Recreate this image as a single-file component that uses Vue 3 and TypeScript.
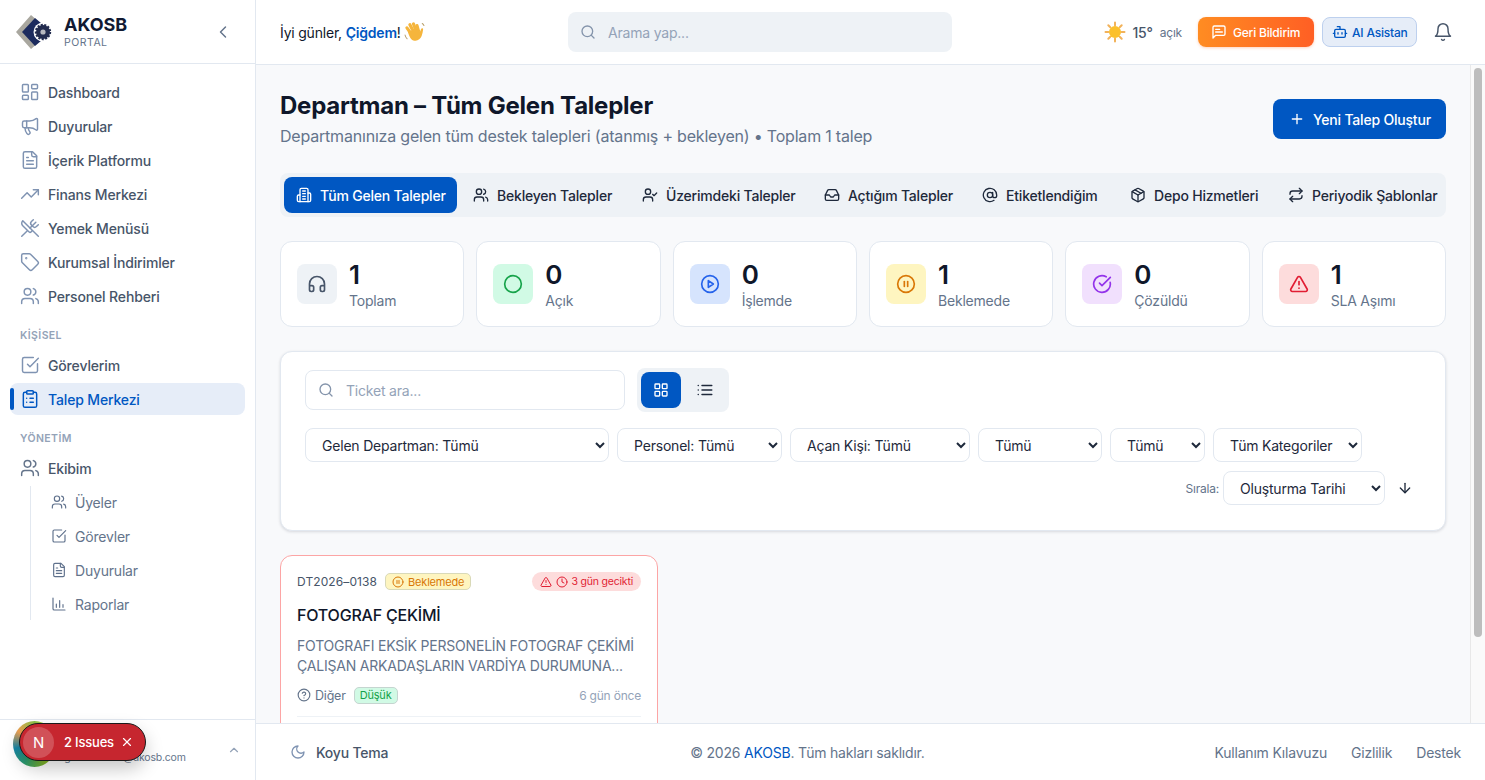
<script setup lang="ts">
import { h } from 'vue';

// lucide shapes, only what this page needs
const icons: Record<string, string> = {
  dashboard: '<rect x="3" y="3" width="7" height="9" rx="1"/><rect x="14" y="3" width="7" height="5" rx="1"/><rect x="14" y="12" width="7" height="9" rx="1"/><rect x="3" y="16" width="7" height="5" rx="1"/>',
  megaphone: '<path d="M11 6a13 13 0 0 0 8.4-2.8A1 1 0 0 1 21 4v12a1 1 0 0 1-1.6.8A13 13 0 0 0 11 14H5a2 2 0 0 1-2-2V8a2 2 0 0 1 2-2z"/><path d="M6 14a12 12 0 0 0 2.4 7.2 2 2 0 0 0 3.2-2.4A8 8 0 0 1 10 14"/><path d="M8 6v8"/>',
  file: '<path d="M15 2H6a2 2 0 0 0-2 2v16a2 2 0 0 0 2 2h12a2 2 0 0 0 2-2V7Z"/><path d="M14 2v4a2 2 0 0 0 2 2h4"/><path d="M10 9H8"/><path d="M16 13H8"/><path d="M16 17H8"/>',
  trending: '<path d="M16 7h6v6"/><path d="m22 7-8.5 8.5-5-5L2 17"/>',
  utensils: '<path d="m16 2-2.3 2.3a3 3 0 0 0 0 4.2l1.8 1.8a3 3 0 0 0 4.2 0L22 8"/><path d="M15 15 3.3 3.3a4.2 4.2 0 0 0 0 6l7.3 7.3c.7.7 2 .7 2.8 0L15 15Zm0 0 7 7"/><path d="m2.1 21.8 6.4-6.3"/><path d="m19 5-7 7"/>',
  tag: '<path d="M12.586 2.586A2 2 0 0 0 11.172 2H4a2 2 0 0 0-2 2v7.172a2 2 0 0 0 .586 1.414l8.704 8.704a2.426 2.426 0 0 0 3.42 0l6.58-6.58a2.426 2.426 0 0 0 0-3.42z"/><circle cx="7.5" cy="7.5" r=".5"/>',
  users: '<path d="M16 21v-2a4 4 0 0 0-4-4H6a4 4 0 0 0-4 4v2"/><circle cx="9" cy="7" r="4"/><path d="M22 21v-2a4 4 0 0 0-3-3.87"/><path d="M16 3.13a4 4 0 0 1 0 7.75"/>',
  check: '<path d="M21 10.5V19a2 2 0 0 1-2 2H5a2 2 0 0 1-2-2V5a2 2 0 0 1 2-2h11"/><path d="m9 11 3 3L22 4"/>',
  clipboard: '<rect x="8" y="2" width="8" height="4" rx="1"/><path d="M16 4h2a2 2 0 0 1 2 2v14a2 2 0 0 1-2 2H6a2 2 0 0 1-2-2V6a2 2 0 0 1 2-2h2"/><path d="M12 11h4"/><path d="M12 16h4"/><path d="M8 11h.01"/><path d="M8 16h.01"/>',
  chart: '<path d="M3 3v16a2 2 0 0 0 2 2h16"/><path d="M8 17v-5"/><path d="M13 17V7"/><path d="M18 17v-4"/>',
  left: '<path d="m15 18-6-6 6-6"/>',
  up: '<path d="m18 15-6-6-6 6"/>',
  search: '<circle cx="11" cy="11" r="8"/><path d="m21 21-4.3-4.3"/>',
  message: '<path d="M21 15a2 2 0 0 1-2 2H7l-4 4V5a2 2 0 0 1 2-2h14a2 2 0 0 1 2 2z"/><path d="M13 8H7"/><path d="M17 12H7"/>',
  bot: '<path d="M12 8V4H8"/><rect x="4" y="8" width="16" height="12" rx="2"/><path d="M2 14h2"/><path d="M20 14h2"/><path d="M15 13v2"/><path d="M9 13v2"/>',
  bell: '<path d="M6 8a6 6 0 0 1 12 0c0 7 3 9 3 9H3s3-2 3-9"/><path d="M10.3 21a1.94 1.94 0 0 0 3.4 0"/>',
  plus: '<path d="M5 12h14"/><path d="M12 5v14"/>',
  building: '<path d="M6 22V4a2 2 0 0 1 2-2h8a2 2 0 0 1 2 2v18Z"/><path d="M6 12H4a2 2 0 0 0-2 2v6a2 2 0 0 0 2 2h2"/><path d="M18 9h2a2 2 0 0 1 2 2v9a2 2 0 0 1-2 2h-2"/><path d="M10 6h4"/><path d="M10 10h4"/><path d="M10 14h4"/><path d="M10 18h4"/>',
  usercheck: '<path d="M16 21v-2a4 4 0 0 0-4-4H6a4 4 0 0 0-4 4v2"/><circle cx="9" cy="7" r="4"/><path d="m16 11 2 2 4-4"/>',
  inbox: '<path d="M22 12h-6l-2 3h-4l-2-3H2"/><path d="M5.45 5.11 2 12v6a2 2 0 0 0 2 2h16a2 2 0 0 0 2-2v-6l-3.45-6.89A2 2 0 0 0 16.76 4H7.24a2 2 0 0 0-1.79 1.11z"/>',
  at: '<circle cx="12" cy="12" r="4"/><path d="M16 8v5a3 3 0 0 0 6 0v-1a10 10 0 1 0-4 8"/>',
  package: '<path d="m7.5 4.27 9 5.15"/><path d="M21 8a2 2 0 0 0-1-1.73l-7-4a2 2 0 0 0-2 0l-7 4A2 2 0 0 0 3 8v8a2 2 0 0 0 1 1.73l7 4a2 2 0 0 0 2 0l7-4A2 2 0 0 0 21 16Z"/><path d="m3.3 7 8.7 5 8.7-5"/><path d="M12 22V12"/>',
  repeat: '<path d="m17 2 4 4-4 4"/><path d="M3 11v-1a4 4 0 0 1 4-4h14"/><path d="m7 22-4-4 4-4"/><path d="M21 13v1a4 4 0 0 1-4 4H3"/>',
  headphones: '<path d="M3 14h3a2 2 0 0 1 2 2v3a2 2 0 0 1-2 2H5a2 2 0 0 1-2-2v-7a9 9 0 0 1 18 0v7a2 2 0 0 1-2 2h-1a2 2 0 0 1-2-2v-3a2 2 0 0 1 2-2h3"/>',
  circle: '<circle cx="12" cy="12" r="10"/>',
  play: '<circle cx="12" cy="12" r="10"/><path d="m10 8 6 4-6 4Z"/>',
  pause: '<circle cx="12" cy="12" r="10"/><path d="M10 15V9"/><path d="M14 15V9"/>',
  done: '<path d="M21.801 10A10 10 0 1 1 17 3.335"/><path d="m9 11 3 3L22 4"/>',
  alert: '<path d="m21.73 18-8-14a2 2 0 0 0-3.48 0l-8 14A2 2 0 0 0 4 21h16a2 2 0 0 0 1.73-3"/><path d="M12 9v4"/><path d="M12 17h.01"/>',
  grid: '<rect x="3" y="3" width="7" height="7" rx="1"/><rect x="14" y="3" width="7" height="7" rx="1"/><rect x="14" y="14" width="7" height="7" rx="1"/><rect x="3" y="14" width="7" height="7" rx="1"/>',
  list: '<path d="M3 12h.01"/><path d="M3 18h.01"/><path d="M3 6h.01"/><path d="M8 12h13"/><path d="M8 18h13"/><path d="M8 6h13"/>',
  down: '<path d="M12 5v14"/><path d="m19 12-7 7-7-7"/>',
  clock: '<circle cx="12" cy="12" r="10"/><path d="M12 6v6l4 2"/>',
  help: '<circle cx="12" cy="12" r="10"/><path d="M9.09 9a3 3 0 0 1 5.83 1c0 2-3 3-3 3"/><path d="M12 17h.01"/>',
  moon: '<path d="M12 3a6 6 0 0 0 9 9 9 9 0 1 1-9-9Z"/>',
  x: '<path d="M18 6 6 18"/><path d="m6 6 12 12"/>'
};

const Icon = (props: { name: string; size?: number }) =>
  h('svg', {
    width: props.size ?? 16,
    height: props.size ?? 16,
    viewBox: '0 0 24 24',
    fill: 'none',
    stroke: 'currentColor',
    'stroke-width': 2,
    'stroke-linecap': 'round',
    'stroke-linejoin': 'round',
    innerHTML: icons[props.name]
  });

const mainNav = [
  { icon: 'dashboard', label: 'Dashboard' },
  { icon: 'megaphone', label: 'Duyurular' },
  { icon: 'file', label: 'İçerik Platformu' },
  { icon: 'trending', label: 'Finans Merkezi' },
  { icon: 'utensils', label: 'Yemek Menüsü' },
  { icon: 'tag', label: 'Kurumsal İndirimler' },
  { icon: 'users', label: 'Personel Rehberi' }
];
const subNav = [
  { icon: 'users', label: 'Üyeler' },
  { icon: 'check', label: 'Görevler' },
  { icon: 'file', label: 'Duyurular' },
  { icon: 'chart', label: 'Raporlar' }
];
const tabs = [
  { icon: 'building', label: 'Tüm Gelen Talepler', active: true },
  { icon: 'users', label: 'Bekleyen Talepler' },
  { icon: 'usercheck', label: 'Üzerimdeki Talepler' },
  { icon: 'inbox', label: 'Açtığım Talepler' },
  { icon: 'at', label: 'Etiketlendiğim' },
  { icon: 'package', label: 'Depo Hizmetleri' },
  { icon: 'repeat', label: 'Periyodik Şablonlar' }
];
const stats = [
  { icon: 'headphones', value: 1, label: 'Toplam', tone: 'slate' },
  { icon: 'circle', value: 0, label: 'Açık', tone: 'green' },
  { icon: 'play', value: 0, label: 'İşlemde', tone: 'blue' },
  { icon: 'pause', value: 1, label: 'Beklemede', tone: 'yellow' },
  { icon: 'done', value: 0, label: 'Çözüldü', tone: 'purple' },
  { icon: 'alert', value: 1, label: 'SLA Aşımı', tone: 'red' }
];
const filters = [
  { label: 'Gelen Departman: Tümü', cls: 'w-dept' },
  { label: 'Personel: Tümü', cls: 'w-pers' },
  { label: 'Açan Kişi: Tümü', cls: 'w-acan' },
  { label: 'Tümü', cls: 'w-status' },
  { label: 'Tümü', cls: 'w-prio' },
  { label: 'Tüm Kategoriler', cls: 'w-cat' }
];
</script>

<template>
  <div class="shell">
    <aside class="sidebar">
      <div class="brand">
        <svg class="logo" width="37" height="34" viewBox="0 0 37 34">
          <path d="M0 17 15 0l7 6-11 11 11 11-7 6Z" fill="#a9a79f" />
          <path d="M6 17 19 3l13 11v6L19 31Z" fill="#1c2b5e" />
          <circle cx="27" cy="17" r="9.5" fill="#fff" />
          <circle cx="27" cy="17" r="7" fill="#232c4f" stroke="#232c4f" stroke-width="2.4" stroke-dasharray="2 1.4" />
          <circle cx="27" cy="17" r="2.6" fill="#b9bac0" />
        </svg>
        <div class="brand-text">
          <strong>AKOSB</strong>
          <span>PORTAL</span>
        </div>
        <Icon class="collapse" name="left" :size="20" />
      </div>

      <nav class="nav">
        <a v-for="item in mainNav" :key="item.label" class="nav-item">
          <Icon :name="item.icon" :size="20" />{{ item.label }}
        </a>
        <div class="nav-label">KİŞİSEL</div>
        <a class="nav-item"><Icon name="check" :size="20" />Görevlerim</a>
        <a class="nav-item active"><Icon name="clipboard" :size="20" />Talep Merkezi</a>
        <div class="nav-label">YÖNETİM</div>
        <a class="nav-item strong"><Icon name="users" :size="20" />Ekibim</a>
        <div class="sub-nav">
          <a v-for="item in subNav" :key="item.label" class="sub-item">
            <Icon :name="item.icon" :size="16" />{{ item.label }}
          </a>
        </div>
      </nav>

      <div class="user">
        <div class="avatar"></div>
        <span class="user-mail">cigdem.ozcan@akosb.com</span>
        <Icon class="user-caret" name="up" :size="14" />
        <div class="issues">
          <span class="issues-n">N</span>
          <span class="issues-text">2 Issues</span>
          <Icon name="x" :size="14" />
        </div>
      </div>
    </aside>

    <div class="main">
      <header class="topbar">
        <div class="greet">
          <span>İyi günler, <b>Çiğdem</b>!</span>
          <svg class="wave" width="21" height="21" viewBox="0 0 20 20">
            <g stroke="#f5b53c" stroke-width="3" stroke-linecap="round" fill="none">
              <path d="M6 10 2.8 5.6" />
              <path d="M8.5 8 5.6 2.6" />
              <path d="M11.2 7.5 9 1.8" />
              <path d="M13.8 8.5 12.4 3.4" />
            </g>
            <path d="M3.6 9 13.4 7l1.8 2.4 1.2-3c.6-1 2-.4 1.8.7-.3 2-.6 4.200-1.400 6.300-1 2.800-3.800 5-6.800 4.400-3.200-.6-4.600-2.800-6.400-8.800Z" fill="#f5b53c" />
            <path d="M1 12.400c.3 1.600 1 2.800 2 3.600M17.400 1.400c.8.500 1.300 1.200 1.600 2" stroke="#b9a06e" stroke-width="1" fill="none" stroke-linecap="round" />
          </svg>
        </div>
        <label class="top-search">
          <Icon name="search" :size="16" />
          <input type="text" placeholder="Arama yap..." />
        </label>
        <div class="top-right">
          <div class="weather">
            <svg width="22" height="22" viewBox="0 0 22 22">
              <g stroke="#f2b25a" stroke-width="2" stroke-linecap="round">
                <path d="M11 1.500v3M11 17.500v3M1.500 11h3M17.500 11h3M4.300 4.300l2 2M15.700 15.700l2 2M17.700 4.300l-2 2M6.300 15.700l-2 2" />
              </g>
              <circle cx="11" cy="11" r="6" fill="#fbc02d" />
              <path d="M15.200 6.700a6 6 0 0 1-8.500 8.500 6 6 0 0 0 8.500-8.500Z" fill="#f59e0b" />
            </svg>
            <span class="temp">15°</span>
            <span class="sky">açık</span>
          </div>
          <button class="btn-feedback"><Icon name="message" :size="16" />Geri Bildirim</button>
          <button class="btn-ai"><Icon name="bot" :size="16" />AI Asistan</button>
          <Icon class="bell" name="bell" :size="20" />
        </div>
      </header>

      <div class="body">
        <div class="content">
          <div class="page-head">
            <div>
              <h1>Departman – Tüm Gelen Talepler</h1>
              <p>Departmanınıza gelen tüm destek talepleri (atanmış + bekleyen) • Toplam 1 talep</p>
            </div>
            <button class="btn-new"><Icon name="plus" :size="16" />Yeni Talep Oluştur</button>
          </div>

          <div class="tabs">
            <a v-for="tab in tabs" :key="tab.label" class="tab" :class="{ 'tab-active': tab.active }">
              <Icon :name="tab.icon" :size="16" />{{ tab.label }}
            </a>
          </div>

          <div class="stats">
            <div v-for="s in stats" :key="s.label" class="stat">
              <div class="stat-icon" :class="s.tone"><Icon :name="s.icon" :size="20" /></div>
              <div class="stat-text">
                <div class="stat-value">{{ s.value }}</div>
                <div class="stat-label">{{ s.label }}</div>
              </div>
            </div>
          </div>

          <section class="filter-card">
            <div class="filter-top">
              <label class="ticket-search">
                <Icon name="search" :size="16" />
                <input type="text" placeholder="Ticket ara..." />
              </label>
              <div class="view-toggle">
                <button class="view-btn view-on"><Icon name="grid" :size="16" /></button>
                <button class="view-btn"><Icon name="list" :size="18" /></button>
              </div>
            </div>
            <div class="filter-row">
              <select v-for="(f, i) in filters" :key="i" class="sel" :class="f.cls">
                <option>{{ f.label }}</option>
              </select>
            </div>
            <div class="sort-row">
              <span class="sort-label">Sırala:</span>
              <select class="sel w-sort"><option>Oluşturma Tarihi</option></select>
              <button class="sort-dir"><Icon name="down" :size="16" /></button>
            </div>
          </section>

          <div class="tickets">
            <article class="ticket">
              <div class="ticket-top">
                <span class="ticket-no">DT2026–0138</span>
                <span class="badge-wait"><Icon name="pause" :size="12" />Beklemede</span>
                <span class="badge-late"><Icon name="alert" :size="12" /><Icon name="clock" :size="12" />3 gün gecikti</span>
              </div>
              <h3>FOTOGRAF ÇEKİMİ</h3>
              <p class="ticket-desc">FOTOGRAFI EKSİK PERSONELİN FOTOGRAF ÇEKİMİ ÇALIŞAN ARKADAŞLARIN VARDİYA DURUMUNA...</p>
              <div class="ticket-meta">
                <Icon name="help" :size="14" />
                <span class="ticket-cat">Diğer</span>
                <span class="badge-low">Düşük</span>
                <span class="ticket-age">6 gün önce</span>
              </div>
              <div class="ticket-foot"></div>
            </article>
          </div>
        </div>
        <div class="rail"><div class="thumb"></div></div>
      </div>

      <footer class="footer">
        <div class="theme"><Icon name="moon" :size="16" />Koyu Tema</div>
        <div class="copy">© 2026 <span>AKOSB</span>. Tüm hakları saklıdır.</div>
        <div class="links">
          <a>Kullanım Kılavuzu</a>
          <a>Gizlilik</a>
          <a>Destek</a>
        </div>
      </footer>
    </div>
  </div>
</template>

<style>
html,
body {
  margin: 0;
  height: 100%;
  overflow: hidden;
}
</style>

<style scoped>
* {
  box-sizing: border-box;
}

.shell {
  display: flex;
  height: 780px;
  font-family: Inter, 'Noto Sans', sans-serif;
  font-size: 14px;
  letter-spacing: -0.2px;
  color: #0f172a;
  background: #f8f9fb;
}

svg {
  flex: none;
  display: block;
}

/* sidebar */
.sidebar {
  width: 256px;
  flex: none;
  display: flex;
  flex-direction: column;
  background: #fff;
  border-right: 1px solid #e2e8f0;
}

.brand {
  height: 64px;
  flex: none;
  display: flex;
  align-items: center;
  padding: 0 22px 0 16px;
  border-bottom: 1px solid #e2e8f0;
}

.brand-text {
  display: flex;
  flex-direction: column;
  margin-left: 11px;
}

.brand-text strong {
  font-size: 18px;
  line-height: 22px;
  font-weight: 700;
  color: #111a33;
  letter-spacing: 0;
}

.brand-text span {
  font-size: 10.5px;
  line-height: 13px;
  color: #64748b;
  letter-spacing: 0.5px;
}

.collapse {
  margin-left: auto;
  color: #64748b;
  stroke-width: 1.75;
}

.nav {
  flex: 1;
  padding: 12px 10px 0;
  display: flex;
  flex-direction: column;
  gap: 2px;
}

.nav-item {
  height: 32px;
  display: flex;
  align-items: center;
  gap: 8px;
  padding-left: 10px;
  border-radius: 8px;
  color: #475569;
  font-weight: 500;
  letter-spacing: -0.15px;
}

.nav-item svg {
  color: #7f93b2;
  stroke-width: 1.75;
}

.nav-item.strong svg {
  color: #64748b;
}

.nav-item.active {
  position: relative;
  background: #e6edf8;
  color: #0057c2;
}

.nav-item.active svg {
  color: #0057c2;
}

.nav-item.active::before {
  content: '';
  position: absolute;
  left: 0;
  top: 5px;
  bottom: 5px;
  width: 4px;
  border-radius: 2px;
  background: #0057c2;
}

.nav-label {
  margin: 15px 0 5px 10px;
  height: 13px;
  line-height: 13px;
  font-size: 10.5px;
  font-weight: 600;
  letter-spacing: 0.4px;
  color: #94a3b8;
}

.sub-nav {
  margin-left: 20px;
  border-left: 1px solid #e2e8f0;
  display: flex;
  flex-direction: column;
  gap: 2px;
}

.sub-item {
  height: 32px;
  display: flex;
  align-items: center;
  gap: 8px;
  padding-left: 20px;
  color: #64748b;
}

.sub-item svg {
  color: #5f718c;
  stroke-width: 1.75;
}

.user {
  position: relative;
  height: 61px;
  flex: none;
  display: flex;
  align-items: center;
  padding: 0 14px 0 13px;
  border-top: 1px solid #e2e8f0;
}

.avatar {
  width: 43px;
  height: 46px;
  flex: none;
  margin-top: -12px;
  border-radius: 50%;
  background: conic-gradient(#8bc34a, #c5d82e, #a7c020, #7fb52a, #2e9d6e, #1787a8, #f0a050, #8bc34a);
}

.user-mail {
  margin-top: 15px;
  font-size: 10.5px;
  line-height: 14px;
  color: #64748b;
  white-space: nowrap;
}

.user-caret {
  margin-left: auto;
  color: #94a3b8;
}

/* dev overlay pill */
.issues {
  position: absolute;
  left: 19px;
  top: 3px;
  width: 127px;
  height: 38px;
  display: flex;
  align-items: center;
  padding: 0 11px 0 3px;
  border-radius: 19px;
  background: #c6262f;
  border: 1px solid #1a1a1a;
  color: #fff;
  box-shadow: 0 8px 18px rgba(0, 0, 0, 0.22);
}

.issues-n {
  width: 31px;
  height: 31px;
  border-radius: 50%;
  display: flex;
  align-items: center;
  justify-content: center;
  background: rgba(255, 255, 255, 0.2);
  font-size: 15px;
}

.issues-text {
  margin: 0 auto 0 10px;
  font-size: 13px;
  font-weight: 500;
}

/* top */
.main {
  flex: 1;
  min-width: 0;
  display: flex;
  flex-direction: column;
}

.topbar {
  height: 65px;
  flex: none;
  display: flex;
  align-items: center;
  padding: 0 24px;
  background: #fff;
  border-bottom: 1px solid #e2e8f0;
}

.greet {
  width: 288px;
  display: flex;
  align-items: center;
}

.greet b {
  color: #0057c2;
  font-weight: 600;
}

.wave {
  margin-left: 3px;
}

.top-search {
  width: 384px;
  height: 40px;
  display: flex;
  align-items: center;
  gap: 12px;
  padding-left: 12px;
  border-radius: 8px;
  background: #eef2f6;
  color: #8494ab;
}

input {
  flex: 1;
  min-width: 0;
  padding: 0;
  border: 0;
  outline: 0;
  background: transparent;
  font: inherit;
  letter-spacing: inherit;
  color: #0f172a;
}

input::placeholder {
  color: #94a3b8;
}

.top-right {
  margin-left: auto;
  display: flex;
  align-items: center;
}

.weather {
  display: flex;
  align-items: center;
  margin-right: 16px;
}

.temp {
  margin-left: 6px;
  font-weight: 500;
  color: #475569;
}

.sky {
  margin-left: 7px;
  font-size: 12px;
  color: #64748b;
}

.btn-feedback,
.btn-ai {
  height: 30px;
  display: flex;
  align-items: center;
  gap: 6px;
  border-radius: 8px;
  font: inherit;
  font-size: 12px;
  font-weight: 500;
  letter-spacing: -0.2px;
}

.btn-feedback {
  width: 116px;
  padding: 0 0 0 13px;
  border: 0;
  color: #fff;
  background: linear-gradient(90deg, #ff8c22, #ff5f24);
  box-shadow: 0 1px 3px rgba(255, 107, 36, 0.3);
}

.btn-ai {
  width: 95px;
  margin-left: 8px;
  gap: 4px;
  padding: 0 0 0 9px;
  border: 1px solid #bdd0ee;
  color: #0057c2;
  background: #e6edf8;
}

.bell {
  margin: 0 8px 0 16px;
  color: #475569;
  stroke-width: 1.75;
}

/* page */
.body {
  flex: 1;
  min-height: 0;
  display: flex;
}

.content {
  flex: 1;
  min-width: 0;
  overflow: hidden;
  padding: 24px;
  display: flex;
  flex-direction: column;
  gap: 24px;
}

.rail {
  width: 15px;
  flex: none;
  padding: 3px 3px 0;
  background: #fafafa;
  border-left: 1px solid #e8e8e8;
}

.thumb {
  height: 569px;
  border-radius: 4px;
  background: #bdbdbd;
}

.page-head {
  flex: none;
  display: flex;
  align-items: center;
  justify-content: space-between;
}

h1 {
  margin: 1px 0 2px;
  font-size: 24px;
  line-height: 32px;
  font-weight: 700;
  letter-spacing: -0.23px;
}

.page-head p {
  margin: 0;
  font-size: 16px;
  line-height: 25px;
  color: #64748b;
}

.btn-new {
  width: 173px;
  height: 40px;
  display: flex;
  align-items: center;
  gap: 8px;
  padding-left: 16px;
  border: 0;
  border-radius: 8px;
  background: #0057c2;
  color: #fff;
  font: inherit;
  font-weight: 500;
  letter-spacing: -0.2px;
}

.tabs {
  flex: none;
  height: 44px;
  display: grid;
  grid-template-columns: 173px 165px 178px 154px 144px 154px 176px;
  align-items: center;
  gap: 4px;
  padding: 0 4px;
  border-radius: 8px;
  background: #eef2f6;
  overflow: hidden;
}

.tab {
  height: 36px;
  display: flex;
  align-items: center;
  gap: 8px;
  padding: 0 12px;
  border-radius: 8px;
  font-weight: 500;
  color: #1e293b;
  white-space: nowrap;
}

.tab-active {
  background: #0057c2;
  color: #fff;
}

.stats {
  flex: none;
  display: grid;
  grid-template-columns: repeat(6, 1fr);
  gap: 12px;
}

.stat {
  height: 86px;
  display: flex;
  align-items: center;
  gap: 12px;
  padding: 0 16px;
  border-radius: 12px;
  background: #fff;
  border: 1px solid #e2e8f0;
}

.stat-icon {
  width: 40px;
  height: 40px;
  display: flex;
  align-items: center;
  justify-content: center;
  border-radius: 8px;
}

.slate { background: #eef2f6; color: #475569; }
.green { background: #d1fae5; color: #16a34a; }
.blue { background: #d6e4fd; color: #2563eb; }
.yellow { background: #fef5c0; color: #d97706; }
.purple { background: #f1e0fd; color: #9333ea; }
.red { background: #fddcdc; color: #e11d33; }

.stat-text {
  padding-top: 3px;
}

.stat-value {
  font-size: 26px;
  line-height: 30px;
  font-weight: 600;
}

.stat-label {
  margin-top: 1px;
  line-height: 20px;
  color: #64748b;
}

.filter-card {
  flex: none;
  height: 180px;
  padding: 16px 24px 0;
  border: 1px solid #e2e8f0;
  border-radius: 12px;
  background: #fff;
  box-shadow: 0 1px 3px rgba(15, 23, 42, 0.14);
}

.filter-top {
  display: flex;
  align-items: center;
  gap: 12px;
}

.ticket-search {
  width: 320px;
  height: 40px;
  display: flex;
  align-items: center;
  gap: 12px;
  padding-left: 12px;
  border: 1px solid #e2e8f0;
  border-radius: 8px;
  color: #8494ab;
}

.view-toggle {
  display: flex;
  gap: 4px;
  padding: 4px;
  border-radius: 8px;
  background: #eef2f6;
}

.view-btn {
  width: 40px;
  height: 36px;
  display: flex;
  align-items: center;
  justify-content: center;
  border: 0;
  border-radius: 8px;
  background: transparent;
  color: #1e293b;
}

.view-on {
  background: #0057c2;
  color: #fff;
}

.filter-row {
  display: flex;
  gap: 8px;
  margin-top: 16px;
}

.sel {
  height: 34px;
  padding: 0 4px 0 12px;
  border: 1px solid #e2e8f0;
  border-radius: 8px;
  background: #fff;
  color: #1e293b;
  font: inherit;
  letter-spacing: inherit;
}

.w-dept { width: 304px; }
.w-pers { width: 165px; }
.w-acan { width: 180px; }
.w-status { width: 124px; }
.w-prio { width: 95px; }
.w-cat { width: 149px; }
.w-sort { width: 162px; }

.sort-row {
  display: flex;
  align-items: center;
  justify-content: flex-end;
  gap: 4px;
  margin-top: 9px;
}

.sort-label {
  font-size: 12px;
  color: #64748b;
}

.sort-dir {
  width: 32px;
  height: 32px;
  display: flex;
  align-items: center;
  justify-content: center;
  border: 0;
  background: transparent;
  color: #1e293b;
}

.tickets {
  flex: none;
  display: grid;
  grid-template-columns: repeat(3, 1fr);
  gap: 16px;
}

.ticket {
  height: 241px;
  padding: 16px;
  border: 1px solid #fca5a5;
  border-radius: 12px;
  background: #fff;
}

.ticket-top {
  display: flex;
  align-items: center;
  height: 19px;
}

.ticket-no {
  font-size: 12px;
  letter-spacing: 0.1px;
  color: #475569;
}

.badge-wait {
  display: flex;
  align-items: center;
  gap: 4px;
  height: 17px;
  margin-left: 8px;
  padding: 0 6px;
  font-size: 11px;
  color: #d97706;
  background: #fef5c0;
  border: 1px solid #d9d9b8;
  border-radius: 5px;
}

.badge-late {
  display: flex;
  align-items: center;
  gap: 4px;
  height: 19px;
  margin-left: auto;
  padding: 0 8px;
  font-size: 10.5px;
  color: #e11d33;
  background: #fddcdc;
  border-radius: 10px;
}

.ticket h3 {
  margin: 12px 0 0;
  font-size: 16px;
  line-height: 24px;
  font-weight: 500;
}

.ticket-desc {
  margin: 9px 0 0;
  line-height: 20px;
  color: #64748b;
}

.ticket-meta {
  display: flex;
  align-items: center;
  gap: 4px;
  margin-top: 10px;
  height: 18px;
  font-size: 12px;
  color: #64748b;
}

.ticket-cat {
  font-size: 12.5px;
}

.badge-low {
  height: 17px;
  line-height: 15px;
  margin-left: 4px;
  padding: 0 5px;
  font-size: 11px;
  color: #16a34a;
  background: #d1fae5;
  border: 1px solid #c5d5d0;
  border-radius: 5px;
}

.ticket-age {
  margin-left: auto;
  color: #94a3b8;
}

.ticket-foot {
  margin-top: 12px;
  border-top: 1px solid #eef2f6;
}

.footer {
  height: 57px;
  flex: none;
  display: flex;
  align-items: center;
  justify-content: space-between;
  padding: 0 24px 0 34px;
  background: #fff;
  border-top: 1px solid #e2e8f0;
  color: #64748b;
}

.theme {
  display: flex;
  align-items: center;
  gap: 10px;
  padding-right: 12px;
  font-weight: 500;
  color: #475569;
}

.theme svg {
  color: #7f93b2;
}

.copy span {
  color: #0057c2;
}

.links {
  display: flex;
  gap: 24px;
}
</style>
